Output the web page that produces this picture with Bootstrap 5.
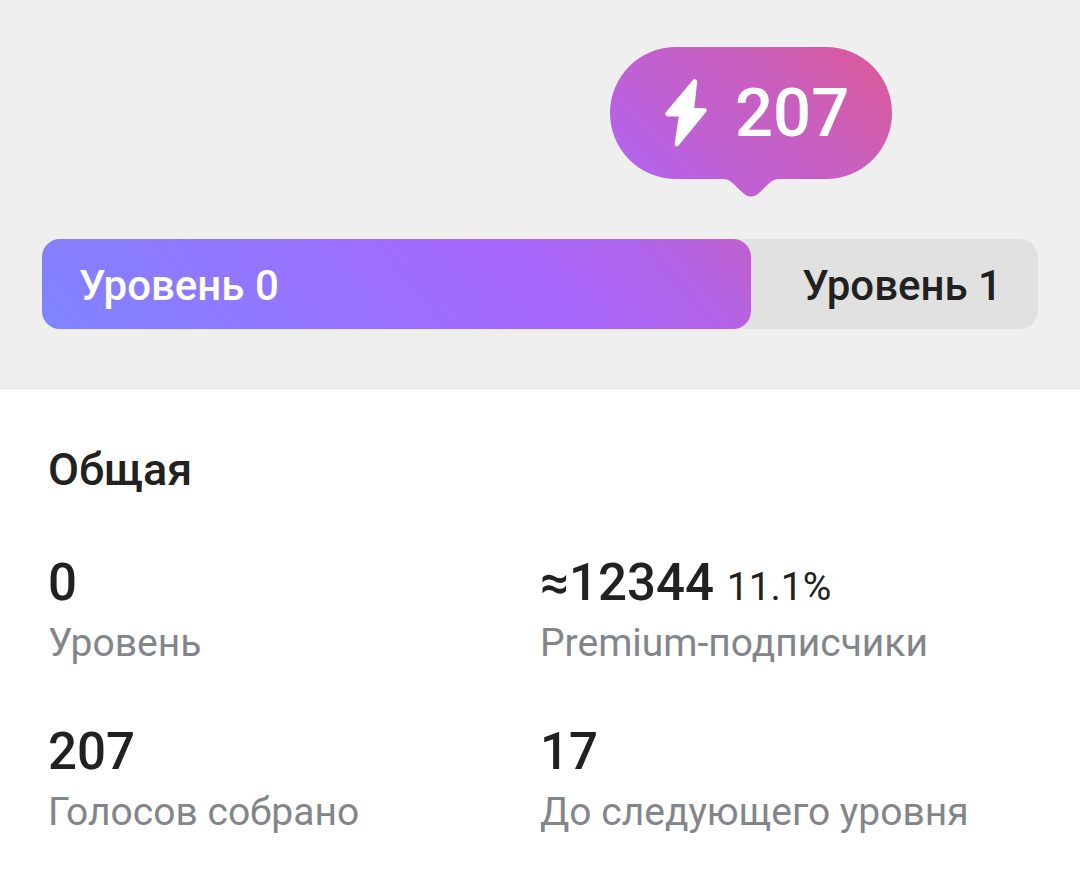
<!DOCTYPE html>
<html lang="ru">
<head>
<meta charset="utf-8">
<meta name="viewport" content="width=device-width, initial-scale=1">
<title>Уровень канала</title>
<link href="https://cdn.jsdelivr.net/npm/bootstrap@5.3.0/dist/css/bootstrap.min.css" rel="stylesheet">
<style>
  body { font-family: Roboto, "Liberation Sans", sans-serif; color: #212121; background: #fff; }
  .boost-panel { background: #efefef; border-bottom: 1px solid #e4e4e4; padding: 47px 42px 59px; }
  .boost-track { height: 90px; margin-top: 60px; border-radius: 18px; background: #e1e1e1; font-size: 42px; line-height: 48px; font-weight: 500; }
  .boost-fill { height: 100%; border-radius: 18px; color: #fff; padding: 4px 0 0 37px; background: linear-gradient(50deg, #7f84ff 0%, #a667ff 66%, #b164ea 86%, #c05fcc 100%); }
  .boost-next { padding: 4px 36px 0 0; }
  .boost-bubble { width: 282px; height: 132px; padding-left: 12px; gap: 28px; border-radius: 66px; color: #fff; background: linear-gradient(45deg, #b064f4 0%, #bf60d2 32%, #ca5fbb 65%, #d75ba2 88%, #da5a9c 100%); font-size: 67px; line-height: 80px; font-weight: 500; transform: translateX(-50%); }
  .boost-tail { top: 100%; left: 50%; transform: translateX(-50%); margin-top: -1px; }
  .stats-panel { padding: 55px 48px 36px; }
  .stats-title { font-size: 45px; line-height: 52px; font-weight: 500; }
  .stats-grid { margin-top: 57px; row-gap: 49px; }
  .stat-value { font-size: 51px; line-height: 60px; font-weight: 500; }
  .stat-share { font-size: 39px; line-height: 40px; font-weight: 400; }
  .stat-label { font-size: 39px; line-height: 60px; color: #82868a; }
</style>
</head>
<body>
<section class="boost-panel">
  <div class="d-flex">
    <div style="width:71.2%"></div>
    <div class="boost-bubble position-relative flex-shrink-0 d-flex align-items-center justify-content-center">
      <svg width="42" height="68" viewBox="0 0 42 68" aria-hidden="true"><path fill="#fff" d="M27.5 1.5Q29.5-1 31.5.8Q32.4 1.6 32 4L29.3 29H39.5Q43 30 41 33L14 66Q12 68.5 10.3 66.7Q9.4 66 9.8 63.5L13.8 37.5H2.5Q-1.2 36.5 1 33Z"/></svg>
      <span>207</span>
      <svg class="boost-tail position-absolute" width="56" height="19" viewBox="0 0 56 19" aria-hidden="true"><path fill="#c160d0" d="M0 0V1C8 1 11 7 19 14Q28 23 37 14C45 7 48 1 56 1V0Z"/></svg>
    </div>
  </div>
  <div class="boost-track d-flex align-items-center justify-content-between">
    <div class="boost-fill d-flex align-items-center" style="width:71.2%">Уровень 0</div>
    <div class="boost-next">Уровень 1</div>
  </div>
</section>
<main class="stats-panel">
  <h2 class="stats-title mb-0">Общая</h2>
  <div class="stats-grid row gx-0">
    <div class="col-6"><div class="stat-value">0</div><div class="stat-label">Уровень</div></div>
    <div class="col-6"><div class="stat-value">≈12344 <span class="stat-share">11.1%</span></div><div class="stat-label">Premium-подписчики</div></div>
    <div class="col-6"><div class="stat-value">207</div><div class="stat-label">Голосов собрано</div></div>
    <div class="col-6"><div class="stat-value">17</div><div class="stat-label">До следующего уровня</div></div>
  </div>
</main>
<script src="https://cdn.jsdelivr.net/npm/bootstrap@5.3.0/dist/js/bootstrap.bundle.min.js"></script>
</body>
</html>
